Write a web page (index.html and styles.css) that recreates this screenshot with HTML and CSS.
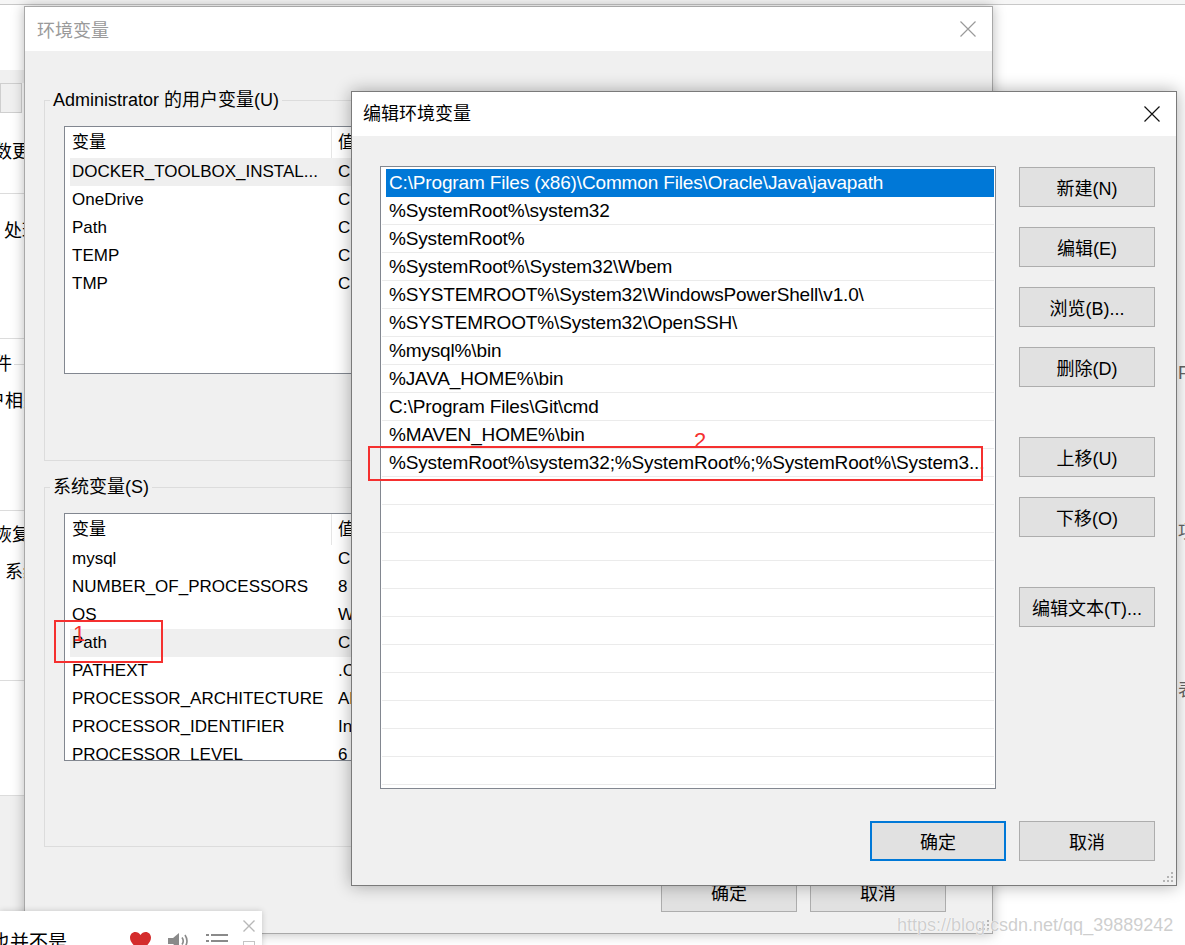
FILE: index.html
```html
<!DOCTYPE html>
<html lang="zh-CN">
<head>
<meta charset="utf-8">
<title>编辑环境变量</title>
<link rel="stylesheet" href="styles.css">
</head>
<body>
<div class="topstrip"></div>

<!-- window behind, left edge -->
<div class="win bg-left">
  <div class="lw-gap"></div>
  <div class="lw-gray"></div>
  <div class="lw-tab"></div>
  <div class="lw-txt t1">数更</div>
  <div class="lw-line l1"></div>
  <div class="lw-txt t2">处理</div>
  <div class="lw-line l2"></div>
  <div class="lw-txt t3"><span>件</span><i class="lw-gline"></i></div>
  <div class="lw-txt t4">户相关</div>
  <div class="lw-line l3"></div>
  <div class="lw-txt t5">恢复</div>
  <div class="lw-txt t6">系统</div>
  <div class="lw-line l4"></div>
  <div class="lw-line l5"></div>
  <div class="lw-fill"></div>
</div>

<!-- window behind, right edge -->
<div class="win bg-right">
  <div class="rw-txt r1">F</div>
  <div class="rw-txt r2">项</div>
  <div class="rw-txt r3">表</div>
</div>

<!-- 环境变量 dialog -->
<div class="win env">
  <div class="titlebar inactive">
    <span class="title">环境变量</span>
    <svg class="close" width="16" height="16" viewBox="0 0 16 16"><path d="M0.5 0.5L15.5 15.5M15.5 0.5L0.5 15.5" stroke="#9a9a9a" stroke-width="1.2" fill="none"/></svg>
  </div>
  <div class="env-body">
    <fieldset class="group g1">
      <legend>Administrator 的用户变量(U)</legend>
      <div class="lv">
        <div class="lv-head"><span class="c1">变量</span><span class="c2">值</span></div>
        <div class="lv-row hot"><span class="c1">DOCKER_TOOLBOX_INSTAL...</span><span class="c2">C:\</span></div>
        <div class="lv-row"><span class="c1">OneDrive</span><span class="c2">C:\</span></div>
        <div class="lv-row"><span class="c1">Path</span><span class="c2">C:\</span></div>
        <div class="lv-row"><span class="c1">TEMP</span><span class="c2">C:\</span></div>
        <div class="lv-row"><span class="c1">TMP</span><span class="c2">C:\</span></div>
      </div>
    </fieldset>
    <fieldset class="group g2">
      <legend>系统变量(S)</legend>
      <div class="lv">
        <div class="lv-head"><span class="c1">变量</span><span class="c2">值</span></div>
        <div class="lv-row"><span class="c1">mysql</span><span class="c2">C:\</span></div>
        <div class="lv-row"><span class="c1">NUMBER_OF_PROCESSORS</span><span class="c2">8</span></div>
        <div class="lv-row"><span class="c1">OS</span><span class="c2">Wi</span></div>
        <div class="lv-row hot"><span class="c1">Path</span><span class="c2">C:\</span></div>
        <div class="lv-row"><span class="c1">PATHEXT</span><span class="c2">.CO</span></div>
        <div class="lv-row"><span class="c1">PROCESSOR_ARCHITECTURE</span><span class="c2">AM</span></div>
        <div class="lv-row"><span class="c1">PROCESSOR_IDENTIFIER</span><span class="c2">Int</span></div>
        <div class="lv-row"><span class="c1">PROCESSOR_LEVEL</span><span class="c2">6</span></div>
      </div>
    </fieldset>
    <div class="env-foot">
      <button class="btn">确定</button>
      <button class="btn">取消</button>
    </div>
  </div>
  <svg class="grip" width="10" height="10" viewBox="0 0 10 10"><g fill="#b4b4b4"><rect x="8" y="0" width="2" height="2"/><rect x="4" y="4" width="2" height="2"/><rect x="8" y="4" width="2" height="2"/><rect x="0" y="8" width="2" height="2"/><rect x="4" y="8" width="2" height="2"/><rect x="8" y="8" width="2" height="2"/></g></svg>
</div>

<!-- music popup -->
<div class="win music">
  <div class="mp-text">也并不是</div>
  <svg class="mp-heart" width="23" height="21" viewBox="0 0 24 22"><path d="M12 21.5C5 15.5 1 11.5 1 6.8C1 3.6 3.5 1 6.6 1C8.8 1 10.7 2.3 12 4.2C13.3 2.3 15.2 1 17.4 1C20.5 1 23 3.6 23 6.8C23 11.5 19 15.5 12 21.5Z" fill="#d42c2c"/></svg>
  <svg class="mp-speaker" width="24" height="20" viewBox="0 0 24 20"><path d="M1 7H6L12 2V18L6 13H1Z" fill="#8a8a8a"/><path d="M15 6.5Q17.5 10 15 13.5M18 4Q22 10 18 16" stroke="#8a8a8a" stroke-width="1.6" fill="none"/></svg>
  <svg class="mp-list" width="22" height="16" viewBox="0 0 22 16"><g fill="#8a8a8a"><rect x="0" y="1" width="3" height="2"/><rect x="5" y="1" width="17" height="2"/><rect x="0" y="7" width="3" height="2"/><rect x="5" y="7" width="17" height="2"/><rect x="0" y="13" width="3" height="2"/><rect x="5" y="13" width="17" height="2"/></g></svg>
  <div class="mp-ctrl">
    <svg width="12" height="12" viewBox="0 0 12 12"><path d="M0.5 0.5L11.5 11.5M11.5 0.5L0.5 11.5" stroke="#b8b8b8" stroke-width="1.4" fill="none"/></svg>
    <i class="mp-square"></i>
  </div>
</div>

<!-- 编辑环境变量 dialog -->
<div class="win edit">
  <div class="titlebar">
    <span class="title">编辑环境变量</span>
    <svg class="close" width="16" height="16" viewBox="0 0 16 16"><path d="M0.5 0.5L15.5 15.5M15.5 0.5L0.5 15.5" stroke="#111" stroke-width="1.2" fill="none"/></svg>
  </div>
  <div class="edit-body">
    <div class="edit-main">
      <div class="edit-list">
        <div class="el-row sel">C:\Program Files (x86)\Common Files\Oracle\Java\javapath</div>
        <div class="el-row">%SystemRoot%\system32</div>
        <div class="el-row">%SystemRoot%</div>
        <div class="el-row">%SystemRoot%\System32\Wbem</div>
        <div class="el-row">%SYSTEMROOT%\System32\WindowsPowerShell\v1.0\</div>
        <div class="el-row">%SYSTEMROOT%\System32\OpenSSH\</div>
        <div class="el-row">%mysql%\bin</div>
        <div class="el-row">%JAVA_HOME%\bin</div>
        <div class="el-row">C:\Program Files\Git\cmd</div>
        <div class="el-row">%MAVEN_HOME%\bin</div>
        <div class="el-row">%SystemRoot%\system32;%SystemRoot%;%SystemRoot%\System3...</div>
        <div class="el-row"></div>
        <div class="el-row"></div>
        <div class="el-row"></div>
        <div class="el-row"></div>
        <div class="el-row"></div>
        <div class="el-row"></div>
        <div class="el-row"></div>
        <div class="el-row"></div>
        <div class="el-row"></div>
        <div class="el-row"></div>
        <div class="el-row"></div>
      </div>
      <div class="edit-btns">
        <button class="btn tall">新建(N)</button>
        <button class="btn tall">编辑(E)</button>
        <button class="btn tall">浏览(B)...</button>
        <button class="btn tall">删除(D)</button>
        <button class="btn tall sep">上移(U)</button>
        <button class="btn tall">下移(O)</button>
        <button class="btn tall sep">编辑文本(T)...</button>
      </div>
    </div>
    <div class="edit-foot">
      <button class="btn tall default">确定</button>
      <button class="btn tall">取消</button>
    </div>
  </div>
  <svg class="grip" width="10" height="10" viewBox="0 0 10 10"><g fill="#b4b4b4"><rect x="8" y="0" width="2" height="2"/><rect x="4" y="4" width="2" height="2"/><rect x="8" y="4" width="2" height="2"/><rect x="0" y="8" width="2" height="2"/><rect x="4" y="8" width="2" height="2"/><rect x="8" y="8" width="2" height="2"/></g></svg>
</div>

<!-- annotations -->
<div class="annot box1"></div>
<div class="annot-num n1">1</div>
<div class="annot box2"></div>
<div class="annot-num n2">2</div>

<div class="watermark">https://blog.csdn.net/qq_39889242</div>
</body>
</html>
```

FILE: styles.css
```css
* { box-sizing: border-box; }
html, body { margin: 0; padding: 0; }
body {
  width: 1185px;
  height: 945px;
  overflow: hidden;
  position: relative;
  background: #ffffff;
  font-family: "Liberation Sans", "Noto Sans CJK SC", sans-serif;
  font-size: 17px;
  color: #000;
}

.topstrip {
  height: 5px;
  background: #f6f6f6;
  border-bottom: 1px solid #c8c8c8;
}

.win { position: absolute; }

/* ---------- background window, left ---------- */
.bg-left {
  left: 0; top: 5px; width: 30px; height: 906px;
  background: #fff;
  overflow: hidden;
  display: flex;
  flex-direction: column;
  z-index: 1;
}
.lw-gap { height: 65px; flex: none; }
.lw-gray { height: 13px; background: #f0f0f0; flex: none; }
.lw-tab { height: 30px; width: 22px; background: #f0f0f0; border: 1px solid #cfcfcf; flex: none; }
.lw-txt { height: 24px; line-height: 24px; font-size: 18px; white-space: nowrap; flex: none; display: flex; align-items: center; }
.lw-line { height: 1px; background: #dcdcdc; flex: none; }
.t1 { margin-top: 27px; margin-left: -6px; }
.l1 { margin-top: 29px; }
.t2 { margin-top: 25px; margin-left: 4px; }
.l2 { margin-top: 95px; }
.t3 { margin-top: 13px; margin-left: -6px; }
.lw-gline { display: block; width: 20px; height: 1px; background: #dcdcdc; margin-left: 2px; }
.t4 { margin-top: 13px; margin-left: -13px; }
.l3 { margin-top: 97px; }
.t5 { margin-top: 12px; margin-left: -6px; }
.t6 { margin-top: 13px; margin-left: 5px; }
.l4 { margin-top: 96px; }
.l5 { margin-top: 114px; }
.lw-fill { flex: 1; background: #f0f0f0; }

/* ---------- background window, right ---------- */
.bg-right {
  left: 1170px; top: 5px; width: 15px; height: 940px;
  background: #fff;
  padding-left: 8px;
  overflow: hidden;
  z-index: 1;
}
.rw-txt { height: 24px; line-height: 24px; font-size: 18px; color: #666; white-space: nowrap; }
.r1 { margin-top: 356px; }
.r2 { margin-top: 135px; }
.r3 { margin-top: 134px; }

/* ---------- generic ---------- */
.titlebar {
  height: 44px;
  background: #fff;
  display: flex;
  align-items: center;
  justify-content: space-between;
  padding-right: 16px;
}
.title { font-size: 18px; }
.titlebar.inactive .title { color: #9a9a9a; }
.close { display: block; }

.btn {
  font-family: "Liberation Sans", "Noto Sans CJK SC", sans-serif;
  font-size: 18px;
  color: #000;
  width: 136px;
  height: 40px;
  background: #e1e1e1;
  border: 1px solid #adadad;
  padding: 0;
  margin: 0;
  flex: none;
}
.btn.default { border: 2px solid #0078d7; }

.grip { position: absolute; right: 3px; bottom: 3px; }

/* ---------- 环境变量 ---------- */
.env {
  left: 24px; top: 6px; width: 969px; height: 928px;
  background: #f0f0f0;
  border: 1px solid #a8a8a8;
  box-shadow: 0 0 12px rgba(0, 0, 0, 0.28);
  z-index: 2;
}
.env .titlebar { padding-left: 12px; }
.env-body {
  display: flex;
  flex-direction: column;
  padding: 37px 0 0 19px;
}
.group {
  margin: 0;
  width: 929px;
  border: 1px solid #dcdcdc;
  padding: 0 0 0 5px;
  min-width: 0;
}
.group legend {
  padding: 0 3px;
  font-size: 18px;
  line-height: 24px;
}
.g1 { height: 373px; }
.g2 { height: 372px; margin-top: 14px; }

.lv {
  margin: 14px 0 0 14px;
  width: 296px;
  height: 248px;
  background: #fff;
  border: 1px solid #828790;
  overflow: hidden;
}
.lv-head { height: 31px; display: flex; }
.lv-head .c1 {
  width: 267px; padding-left: 7px; line-height: 31px;
  border-right: 1px solid #e5e5e5;
  flex: none;
}
.lv-head .c2 { padding-left: 6px; line-height: 31px; white-space: nowrap; }
.lv-row {
  height: 28px; line-height: 28px;
  margin-left: 5px;
  display: flex;
  white-space: nowrap;
}
.lv-row .c1 { width: 262px; padding-left: 2px; flex: none; overflow: hidden; }
.lv-row .c2 { padding-left: 6px; }
.lv-row.hot { background: #efefef; }

.env-foot {
  display: flex;
  justify-content: flex-end;
  gap: 13px;
  margin-top: 25px;
  padding-right: 46px;
}

/* ---------- music popup ---------- */
.music {
  left: 0; top: 911px; width: 262px; height: 40px;
  background: #fff;
  box-shadow: 0 0 6px rgba(0, 0, 0, 0.18);
  display: flex;
  align-items: flex-start;
  z-index: 3;
}
.mp-text { margin: 20px 0 0 -9px; font-size: 19px; line-height: 24px; white-space: nowrap; }
.mp-heart { margin: 20px 0 0 62px; flex: none; }
.mp-speaker { margin: 20px 0 0 15px; flex: none; }
.mp-list { margin: 22px 0 0 15px; flex: none; }
.mp-ctrl {
  margin: 9px 0 0 15px;
  display: flex; flex-direction: column; align-items: center; gap: 9px;
}
.mp-ctrl svg { display: block; }
.mp-square { display: block; width: 12px; height: 12px; border: 1px solid #c4c4c4; }

/* ---------- 编辑环境变量 ---------- */
.edit {
  left: 351px; top: 91px; width: 826px; height: 795px;
  background: #f0f0f0;
  border: 1px solid #7a7a7a;
  box-shadow: 0 0 16px rgba(0, 0, 0, 0.32);
  z-index: 4;
}
.edit .titlebar { padding-left: 11px; }
.edit .title { position: relative; top: -2px; }
.edit-body { padding: 30px 21px 0 28px; }
.edit-main { display: flex; gap: 23px; }
.edit-list {
  width: 616px;
  height: 623px;
  background: #fff;
  border: 1px solid #828790;
  padding: 2px 1px 0;
  overflow: hidden;
}
.el-row {
  height: 28px;
  line-height: 27px;
  font-size: 19px;
  letter-spacing: -0.15px;
  padding-left: 7px;
  border-bottom: 1px solid #ebebeb;
  white-space: nowrap;
  overflow: hidden;
}
.el-row.sel {
  margin-left: 4px;
  padding-left: 3px;
  background: #0078d7;
  border-bottom-color: #0078d7;
  color: #fff;
}
.edit-btns {
  display: flex;
  flex-direction: column;
  gap: 20px;
  padding-top: 1px;
}
.edit-btns .sep { margin-top: 30px; }
.edit-foot {
  display: flex;
  justify-content: flex-end;
  gap: 13px;
  margin-top: 32px;
}

/* ---------- annotations ---------- */
.annot {
  position: absolute;
  border: 2px solid #f5302f;
  z-index: 10;
}
.box1 { left: 54px; top: 620px; width: 109px; height: 43px; }
.box2 { left: 368px; top: 446px; width: 615px; height: 35px; }
.annot-num {
  position: absolute;
  color: #f5302f;
  font-size: 22px;
  line-height: 22px;
  z-index: 10;
}
.n1 { left: 73px; top: 623px; }
.n2 { left: 694px; top: 430px; }

.watermark {
  position: absolute;
  left: 897px; top: 914px;
  font-size: 18px;
  line-height: 22px;
  color: rgba(190, 190, 190, 0.75);
  text-shadow: 0 0 1px #fff, 0 0 1px #fff;
  z-index: 12;
  white-space: nowrap;
}
```
